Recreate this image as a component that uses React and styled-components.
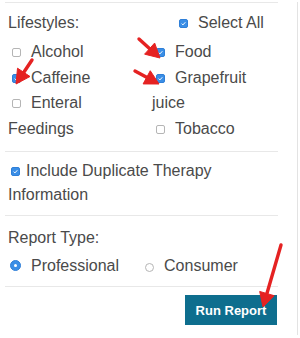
import React from "react";
import styled, { createGlobalStyle } from "styled-components";

const Global = createGlobalStyle`
  html, body {
    margin: 0;
    padding: 0;
    background: #fff;
  }
  body {
    font-family: "Liberation Sans", Arial, sans-serif;
  }
`;

const Frame = styled.div`
  position: relative;
  width: 297px;
  height: 333px;
  border-right: 1px solid #e3e3e3;
`;

const Panel = styled.form`
  margin: 2px 0 0 5px;
  width: 273px;
  border-top: 1px solid #e8e8e8;
  color: #4a4a4a;
  font-size: 16px;
`;

const Section = styled.div`
  padding: ${p => p.$pad};
  padding-left: 3px;
  border-bottom: ${p => (p.$last ? "0" : "1px solid #e8e8e8")};
`;

const Grid = styled.div`
  display: grid;
  grid-template-columns: 144px 1fr;
  line-height: ${p => p.$lh || "25.5px"};
  margin-bottom: ${p => p.$mb || "0"};
`;

const Col = styled.div`
  padding-right: 8px;
`;

const Item = styled.label`
  display: block;
  padding-left: ${p => p.$indent || "0"};
`;

const Line = styled.div`
  line-height: 24px;
  margin-top: ${p => p.$mt || "0"};
`;

const Box = styled.span`
  display: inline-block;
  box-sizing: border-box;
  width: 9px;
  height: 9px;
  margin: 0 ${p => p.$gap}px 0 ${p => p.$lead}px;
  border-radius: 2px;
  border: 1px solid ${p => (p.$on ? "#2f7fd8" : "#b5b5b5")};
  background: ${p => (p.$on ? "#3a8ee6" : "#fff")};
  vertical-align: baseline;

  svg {
    display: block;
    width: 100%;
    height: 100%;
  }
`;

const Radio = styled.span`
  display: inline-block;
  box-sizing: border-box;
  width: ${p => (p.$on ? "11px" : "9px")};
  height: ${p => (p.$on ? "11px" : "9px")};
  margin: 0 10px 0 ${p => p.$lead}px;
  border-radius: 50%;
  border: 1px solid ${p => (p.$on ? "#2f7fd8" : "#b5b5b5")};
  background: ${p => (p.$on ? "#3a8ee6" : "#fff")};
  vertical-align: ${p => (p.$on ? "0" : "-1px")};
  position: relative;

  &::after {
    content: "";
    display: ${p => (p.$on ? "block" : "none")};
    position: absolute;
    left: 50%;
    top: 50%;
    width: 3px;
    height: 3px;
    margin: -1.5px 0 0 -1.5px;
    border-radius: 50%;
    background: #fff;
  }
`;

const RadioLabel = styled.label`
  display: inline-block;
  margin-right: ${p => p.$space || "0"};
`;

const RunButton = styled.button`
  display: block;
  margin: 0 1px 0 auto;
  width: 92px;
  height: 30px;
  padding: 0;
  border: 0;
  background: #0e6e8e;
  color: #fff;
  font: bold 13px "Liberation Sans", Arial, sans-serif;
`;

const Overlay = styled.svg`
  position: absolute;
  left: 0;
  top: 0;
  pointer-events: none;
`;

const Check = ({ on, lead = 4, gap = 10 }) => (
  <Box $on={on} $lead={lead} $gap={gap}>
    {on && (
      <svg viewBox="0 0 10 10">
        <path d="M2.4 5.2 L4.2 7 L7.6 3.2" fill="none" stroke="#fff" strokeWidth="1.4" />
      </svg>
    )}
  </Box>
);

const Arrow = ({ x1, y1, x2, y2 }) => {
  const a = Math.atan2(y2 - y1, x2 - x1);
  const len = 14;
  const w = 7.5;
  const bx = x2 - len * Math.cos(a);
  const by = y2 - len * Math.sin(a);
  const px = -Math.sin(a) * w;
  const py = Math.cos(a) * w;
  return (
    <g fill="#e52222" stroke="#e52222">
      <line x1={x1} y1={y1} x2={bx + 2 * Math.cos(a)} y2={by + 2 * Math.sin(a)} strokeWidth="3.4" strokeLinecap="round" />
      <polygon points={`${x2},${y2} ${bx + px},${by + py} ${bx - px},${by - py}`} strokeWidth="1" strokeLinejoin="round" />
    </g>
  );
};

export default function App() {
  return (
    <Frame>
      <Global />
      <Panel>
        <Section $pad="7px 0 10px">
          <Grid $lh="26px" $mb="3px">
            <Col>Lifestyles:</Col>
            <Col>
              <Item $indent="23px">
                <Check on />Select All
              </Item>
            </Col>
          </Grid>
          <Grid>
            <Col>
              <Item><Check />Alcohol</Item>
              <Item><Check on />Caffeine</Item>
              <Item><Check />Enteral Feedings</Item>
            </Col>
            <Col>
              <Item><Check on />Food</Item>
              <Item><Check on />Grapefruit juice</Item>
              <Item><Check />Tobacco</Item>
            </Col>
          </Grid>
        </Section>

        <Section $pad="7px 0 8px">
          <Line>
            <Check on lead={3} gap={6} />Include Duplicate Therapy Information
          </Line>
        </Section>

        <Section $pad="10px 0 8px">
          <Line>Report Type:</Line>
          <Line $mt="4px">
            <RadioLabel $space="26px">
              <Radio $on $lead={2} />Professional
            </RadioLabel>
            <RadioLabel>
              <Radio $lead={0} />Consumer
            </RadioLabel>
          </Line>
        </Section>

        <Section $pad="8px 0 0" $last>
          <RunButton type="button">Run Report</RunButton>
        </Section>
      </Panel>

      <Overlay width="300" height="338">
        <Arrow x1={32} y1={58} x2={16} y2={82} />
        <Arrow x1={139} y1={37} x2={160} y2={56} />
        <Arrow x1={135} y1={69} x2={159} y2={82} />
        <Arrow x1={281} y1={243} x2={263} y2={305} />
      </Overlay>
    </Frame>
  );
}
